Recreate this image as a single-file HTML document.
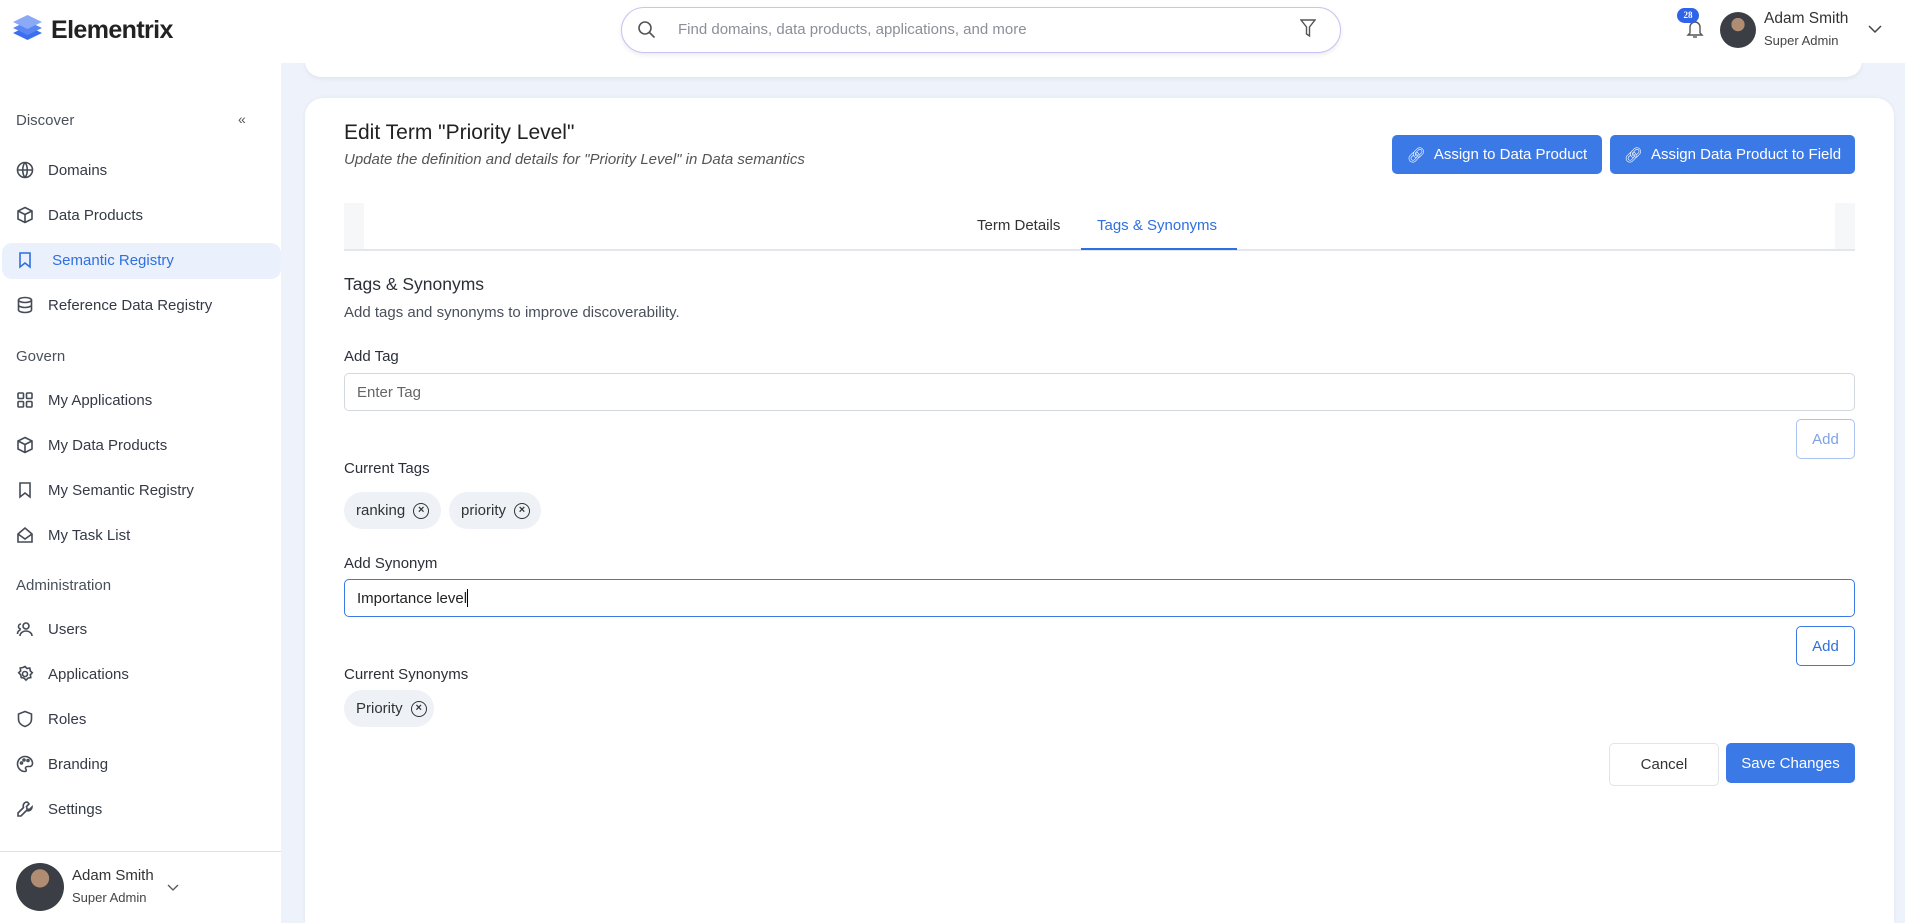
<!DOCTYPE html>
<html style="overflow:hidden"><head><meta charset="utf-8"><style>
*{box-sizing:border-box;margin:0;padding:0}
html,body{width:1905px;height:923px;overflow:hidden}
body{font-family:"Liberation Sans",sans-serif;color:#2b2f38;background:#eef2fa;position:relative}
.a{position:absolute}
.side{left:0;top:0;width:281px;height:923px;background:#fff}
.hdr{left:0;top:0;width:1905px;height:63px;background:#fff}
.nav{left:16px;font-size:15px;color:#343a46;display:flex;align-items:center;gap:0}
.nav svg{width:18px;height:18px;margin-right:14px;stroke:#444b57;fill:none;stroke-width:1.6}
.sec{left:16px;font-size:15px;color:#4a505b}
.lbl{left:344px;font-size:15px;color:#2b2f38}
.inp{left:344px;width:1511px;height:38px;border:1px solid #d3d7de;border-radius:5px;font-size:15px;padding-left:12px;display:flex;align-items:center}
.btn{border-radius:5px;font-size:15px;display:flex;align-items:center;justify-content:center}
.chip{height:37px;border-radius:19px;background:#eef1f6;font-size:15px;display:flex;align-items:center;padding-left:12px;color:#333}
.x{width:16px;height:16px;border:1.5px solid #333;border-radius:50%;margin-left:8px;font-size:11px;line-height:13px;text-align:center;font-weight:bold}
</style></head><body>
<div class="a" style="left:305px;top:30px;width:1557px;height:47px;background:#fff;border-radius:0 0 16px 16px;box-shadow:0 2px 4px rgba(0,0,0,.06)"></div>
<div class="a side"></div>
<div class="a hdr"></div>
<svg class="a" style="left:12px;top:14px" width="31" height="32" viewBox="0 0 31 32"><path d="M15.5 12 L30 19 L15.5 26 L1 19Z" fill="#3c6ff0"/><path d="M15.5 7 L30 14 L15.5 21 L1 14Z" fill="#5a86f3"/><path d="M15.5 1 L30 8 L15.5 15 L1 8Z" fill="#8aaaf7"/></svg>
<div class="a" style="left:51px;top:16px;font-size:25px;font-weight:bold;color:#222;letter-spacing:-0.6px">Elementrix</div>
<div class="a" style="left:621px;top:7px;width:720px;height:46px;border:1px solid #c9c2f3;border-radius:23px;background:#fff;box-shadow:0 2px 5px rgba(0,0,0,.08)"></div>
<svg class="a" style="left:637px;top:20px" width="19" height="19" viewBox="0 0 19 19" fill="none" stroke="#555" stroke-width="1.6"><circle cx="8" cy="8" r="6"/><path d="M12.5 12.5l5 5"/></svg>
<div class="a" style="left:678px;top:21px;font-size:15px;color:#8a8f99">Find domains, data products, applications, and more</div>
<svg class="a" style="left:1300px;top:19px" width="16" height="19" viewBox="0 0 16 19" fill="none" stroke="#555" stroke-width="1.4"><path d="M1 1h14l-5.5 7v9l-3-2V8z"/></svg>
<svg class="a" style="left:1686px;top:19px" width="18" height="20" viewBox="0 0 18 20" fill="none" stroke="#555" stroke-width="1.4"><path d="M4 14V8a5 5 0 0110 0v6l2 2H2z"/><path d="M7 18h4"/></svg>
<div class="a" style="left:1677px;top:8px;width:22px;height:15px;border-radius:8px;background:#2f63e8;color:#fff;font-size:9px;font-weight:bold;text-align:center;line-height:15px;font-family:'Liberation Serif',serif">28</div>
<div class="a" style="left:1720px;top:12px;width:36px;height:36px;border-radius:50%;background:radial-gradient(circle at 50% 35%,#b08d72 0 22%,#3b3f45 23% 100%)"></div>
<div class="a" style="left:1764px;top:10px;font-size:15.5px;color:#333">Adam Smith</div>
<div class="a" style="left:1764px;top:33px;font-size:13px;color:#444">Super Admin</div>
<svg class="a" style="left:1868px;top:25px" width="14" height="9" viewBox="0 0 14 9" fill="none" stroke="#444" stroke-width="1.5"><path d="M1 1l6 6 6-6"/></svg>
<div class="a sec" style="top:112px">Discover</div>
<div class="a" style="left:238px;top:111px;font-size:14px;color:#555">«</div>
<div class="a" style="left:2px;top:243px;width:279px;height:36px;background:#eaf1fc;border-radius:10px"></div>
<div class="a nav" style="top:161px"><svg viewBox="0 0 18 18"><circle cx="9" cy="9" r="7.5"/><path d="M1.5 9h15M9 1.5c-3 3.5-3 11.5 0 15M9 1.5c3 3.5 3 11.5 0 15"/></svg>Domains</div>
<div class="a nav" style="top:206px"><svg viewBox="0 0 18 18"><path d="M9 1.5l7 3.5v8l-7 3.5-7-3.5V5zM2 5l7 3.5L16 5M9 8.5v8"/></svg>Data Products</div>
<div class="a nav" style="top:251px;color:#2f6fe0"><svg viewBox="0 0 18 18" style="stroke:#2f6fe0"><path d="M4 2h10v14l-5-4-5 4z"/></svg>&nbsp;Semantic Registry</div>
<div class="a nav" style="top:296px"><svg viewBox="0 0 18 18"><ellipse cx="9" cy="4" rx="6.5" ry="2.5"/><path d="M2.5 4v10c0 1.4 3 2.5 6.5 2.5s6.5-1.1 6.5-2.5V4M2.5 9c0 1.4 3 2.5 6.5 2.5s6.5-1.1 6.5-2.5"/></svg>Reference Data Registry</div>
<div class="a sec" style="top:348px">Govern</div>
<div class="a nav" style="top:391px"><svg viewBox="0 0 18 18"><rect x="2" y="2" width="5.5" height="5.5" rx="1"/><rect x="10.5" y="2" width="5.5" height="5.5" rx="1"/><rect x="2" y="10.5" width="5.5" height="5.5" rx="1"/><rect x="10.5" y="10.5" width="5.5" height="5.5" rx="1"/></svg>My Applications</div>
<div class="a nav" style="top:436px"><svg viewBox="0 0 18 18"><path d="M9 1.5l7 3.5v8l-7 3.5-7-3.5V5zM2 5l7 3.5L16 5M9 8.5v8"/></svg>My Data Products</div>
<div class="a nav" style="top:481px"><svg viewBox="0 0 18 18"><path d="M4 2h10v14l-5-4-5 4z"/></svg>My Semantic Registry</div>
<div class="a nav" style="top:526px"><svg viewBox="0 0 18 18"><path d="M2 8l7-6 7 6v8H2zM2 8l7 5 7-5"/></svg>My Task List</div>
<div class="a sec" style="top:577px">Administration</div>
<div class="a nav" style="top:620px"><svg viewBox="0 0 18 18"><circle cx="10" cy="6" r="3"/><path d="M4 16c0-3 3-5 6-5s6 2 6 5M5 4a2.5 2.5 0 000 5M1.5 14c0-2 1-3.5 3-4"/></svg>Users</div>
<div class="a nav" style="top:665px"><svg viewBox="0 0 18 18"><circle cx="9" cy="9" r="2.5"/><path d="M9 1.5l2 2 2.8-.5.5 2.8 2 2-2 2 .5 2.8-2.8.5-2 2-2-2-2.8-.5-.5-2.8-2-2 2-2-.5-2.8 2.8-.5z"/></svg>Applications</div>
<div class="a nav" style="top:710px"><svg viewBox="0 0 18 18"><path d="M9 1.5l6.5 2.5v5c0 4-3 6.5-6.5 7.5C5.5 15.5 2.5 13 2.5 9V4z"/></svg>Roles</div>
<div class="a nav" style="top:755px"><svg viewBox="0 0 18 18"><path d="M9 1.5a7.5 7.5 0 100 15c1.5 0 1.5-1.5.8-2.5-.8-1 0-2.5 1.5-2.5h2.2c1.5 0 3-1 3-3C16.5 4.5 13 1.5 9 1.5z"/><circle cx="5.5" cy="8" r="1"/><circle cx="8" cy="5" r="1"/><circle cx="12" cy="5.5" r="1"/></svg>Branding</div>
<div class="a nav" style="top:800px"><svg viewBox="0 0 18 18"><path d="M11 2a4 4 0 00-3.5 5.5L2 13v3h3l5.5-5.5A4 4 0 0016 7l-2.5 2.5L11 9l-.5-2.5L13 4a4 4 0 00-2-2z"/></svg>Settings</div>
<div class="a" style="left:0;top:851px;width:281px;height:1px;background:#dcdfe4"></div>
<div class="a" style="left:16px;top:863px;width:48px;height:48px;border-radius:50%;background:radial-gradient(circle at 50% 32%,#b08d72 0 22%,#3b3f45 23% 100%)"></div>
<div class="a" style="left:72px;top:867px;font-size:15px;color:#333">Adam Smith</div>
<div class="a" style="left:72px;top:890px;font-size:13px;color:#444">Super Admin</div>
<svg class="a" style="left:167px;top:884px" width="12" height="8" viewBox="0 0 12 8" fill="none" stroke="#555" stroke-width="1.3"><path d="M1 1l5 5 5-5"/></svg>
<div class="a" style="left:305px;top:98px;width:1589px;height:825px;background:#fff;border-radius:18px 18px 0 0;box-shadow:0 0 4px rgba(0,0,0,.06)"></div>
<div class="a" style="left:344px;top:121px;font-size:21px;color:#222">Edit Term "Priority Level"</div>
<div class="a" style="left:344px;top:151px;font-size:15px;font-style:italic;color:#555">Update the definition and details for "Priority Level" in Data semantics</div>
<div class="a btn" style="left:1392px;top:135px;width:210px;height:39px;background:#3b79e6;color:#fff"><span style="margin-right:8px">&#x1F517;&#xFE0E;</span>Assign to Data Product</div>
<div class="a btn" style="left:1610px;top:135px;width:245px;height:39px;background:#3b79e6;color:#fff"><span style="margin-right:8px">&#x1F517;&#xFE0E;</span>Assign Data Product to Field</div>
<div class="a" style="left:344px;top:203px;width:20px;height:46px;background:#f6f7f9"></div>
<div class="a" style="left:1835px;top:203px;width:20px;height:46px;background:#f6f7f9"></div>
<div class="a" style="left:344px;top:249px;width:1511px;height:2px;background:#e3e6eb"></div>
<div class="a" style="left:977px;top:217px;font-size:15px;color:#333">Term Details</div>
<div class="a" style="left:1097px;top:217px;font-size:15px;color:#2f6fe0">Tags &amp; Synonyms</div>
<div class="a" style="left:1081px;top:248px;width:156px;height:2px;background:#2f6fe0"></div>
<div class="a" style="left:344px;top:274px;font-size:17.5px;color:#2b2f38">Tags &amp; Synonyms</div>
<div class="a" style="left:344px;top:304px;font-size:15px;color:#4a505b">Add tags and synonyms to improve discoverability.</div>
<div class="a lbl" style="top:348px">Add Tag</div>
<div class="a inp" style="top:373px;color:#666">Enter Tag</div>
<div class="a btn" style="left:1796px;top:419px;width:59px;height:40px;border:1px solid #a9c2f0;color:#7ea2e8">Add</div>
<div class="a lbl" style="top:460px">Current Tags</div>
<div class="a chip" style="left:344px;top:492px;width:97px">ranking<span class="x">×</span></div>
<div class="a chip" style="left:449px;top:492px;width:92px">priority<span class="x">×</span></div>
<div class="a lbl" style="top:555px">Add Synonym</div>
<div class="a inp" style="top:579px;border-color:#3b79e6;color:#222">Importance level<span style="display:inline-block;width:1px;height:18px;background:#000"></span></div>
<div class="a btn" style="left:1796px;top:626px;width:59px;height:40px;border:1px solid #3b79e6;color:#2f6fe0">Add</div>
<div class="a lbl" style="top:666px">Current Synonyms</div>
<div class="a chip" style="left:344px;top:690px;width:90px">Priority<span class="x">×</span></div>
<div class="a btn" style="left:1609px;top:743px;width:110px;height:43px;border:1px solid #e1e4e8;color:#333">Cancel</div>
<div class="a btn" style="left:1726px;top:743px;width:129px;height:40px;background:#3b79e6;color:#fff">Save Changes</div>
</body></html>
